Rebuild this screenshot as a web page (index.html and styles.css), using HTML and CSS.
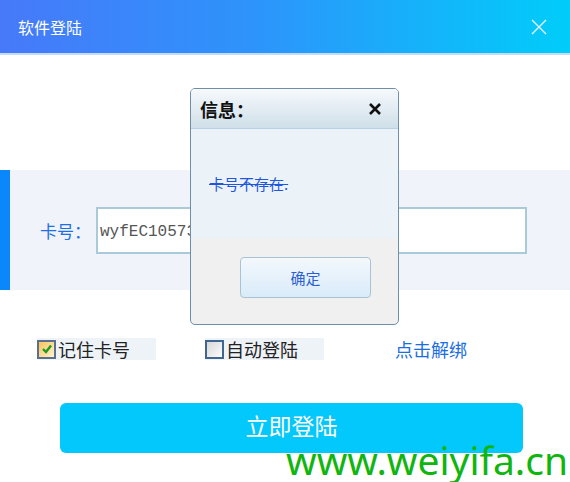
FILE: index.html
```html
<!DOCTYPE html>
<html lang="zh-CN">
<head>
    <meta charset="UTF-8">
    <meta name="viewport" content="width=device-width, initial-scale=1.0">
    <link rel="stylesheet" href="styles.css">
</head>
<body>
    <div class="window">
        <div class="titlebar">
            <span class="title">软件登陆</span>
            <svg class="close" width="16" height="16" viewBox="0 0 16 16">
                <path d="M1 1 L15 15 M15 1 L1 15" stroke="#e8f6ff" stroke-width="1.4" fill="none"/>
            </svg>
        </div>

        <div class="card-row">
            <label class="card-label">卡号：</label>
            <div class="card-input">wyfEC10573</div>
        </div>

        <div class="options">
            <div class="check">
                <span class="box checked">
                    <svg width="12" height="12" viewBox="0 0 12 12">
                        <path d="M2 6 L5 9 L10 2.5" stroke="#1f9a1f" stroke-width="2.4" fill="none"/>
                    </svg>
                </span>
                <span>记住卡号</span>
            </div>
            <div class="check second">
                <span class="box"></span>
                <span>自动登陆</span>
            </div>
            <a class="unbind">点击解绑</a>
        </div>

        <button class="login">立即登陆</button>

        <div class="dialog">
            <div class="dialog-head">
                <span>信息：</span>
                <svg width="14" height="14" viewBox="0 0 14 14">
                    <path d="M2 2 L12 12 M12 2 L2 12" stroke="#111" stroke-width="2.6" fill="none"/>
                </svg>
            </div>
            <div class="dialog-body">
                <span class="msg">卡号不存在.</span>
            </div>
            <div class="dialog-foot">
                <button class="ok">确定</button>
            </div>
        </div>

        <div class="watermark">www.weiyifa.cn</div>
    </div>
</body>
</html>
```

FILE: styles.css
```css
body {
    margin: 0;
    font-family: "Noto Sans CJK SC", "Noto Sans", sans-serif;
    background: #fff;
}
.window {
    position: relative;
    width: 570px;
    height: 482px;
    overflow: hidden;
    background: #fff;
}
.titlebar {
    height: 53px;
    display: flex;
    align-items: center;
    justify-content: space-between;
    padding: 0 23px 0 18px;
    background: linear-gradient(90deg, #4779f9, #2d94fb 45%, #00cdf9);
    border-bottom: 2px solid #c4dcf6;
}
.title {
    color: #fff;
    font-size: 16px;
}
.card-row {
    margin-top: 115px;
    height: 120px;
    display: flex;
    align-items: center;
    background: #f0f4fa;
    border-left: 10px solid #0a88fb;
    padding-left: 30px;
}
.card-label {
    color: #1e6ee6;
    font-size: 17px;
    width: 56px;
}
.card-input {
    width: 425px;
    height: 43px;
    border: 2px solid #a8cad9;
    background: #fff;
    font-family: "Liberation Mono", monospace;
    font-size: 16px;
    color: #555;
    line-height: 47px;
    padding-left: 2px;
}
.options {
    display: flex;
    align-items: center;
    margin-top: 46px;
    padding-left: 37px;
    font-size: 18px;
    color: #222;
}
.check {
    display: flex;
    align-items: center;
    width: 119px;
    height: 22px;
    background: #eef3f8;
}
.check.second {
    margin-left: 49px;
}
.box {
    width: 15px;
    height: 15px;
    border: 2px solid #3e6690;
    background: linear-gradient(135deg, #d8d8d8, #fbfbfb);
    display: flex;
    align-items: center;
    justify-content: center;
    margin-right: 2px;
}
.box.checked {
    border-color: #5a7189;
    background: linear-gradient(135deg, #f7c45a, #fff3d2);
}
.unbind {
    margin-left: 71px;
    color: #1a6ee2;
    font-size: 18px;
}
.login {
    display: block;
    margin: 41px 0 0 60px;
    width: 463px;
    height: 50px;
    border: none;
    border-radius: 6px;
    background: #02c8fc;
    color: #fff;
    font-family: inherit;
    font-size: 23px;
    line-height: 30px;
    padding: 0 0 6px;
}
.dialog {
    position: absolute;
    left: 190px;
    top: 88px;
    width: 207px;
    height: 235px;
    border: 1px solid #6f8fa9;
    border-radius: 5px;
    overflow: hidden;
    background: #f0f0f0;
    display: flex;
    flex-direction: column;
}
.dialog-head {
    height: 39px;
    display: flex;
    align-items: center;
    justify-content: space-between;
    padding: 0 16px 0 9px;
    background: linear-gradient(#f6f9fc, #cfdfe9);
    border-bottom: 1px solid #b7d1e3;
    font-size: 18px;
    font-weight: bold;
    color: #111;
}
.dialog-body {
    height: 109px;
    background: #ecf3f8;
    padding: 42px 0 0 18px;
    box-sizing: border-box;
}
.msg {
    color: #1e56dd;
    font-size: 15px;
    text-decoration: line-through;
}
.dialog-foot {
    flex: 1;
    padding: 19px 0 0 49px;
}
.ok {
    width: 131px;
    height: 41px;
    border: 1px solid #a9c3d6;
    border-radius: 4px;
    background: linear-gradient(#f3f8fd, #d9ebf9);
    color: #2d5fd2;
    font-family: inherit;
    font-size: 15px;
}
.watermark {
    position: absolute;
    left: 286px;
    top: 440px;
    color: #10b510;
    font-family: "Noto Sans", sans-serif;
    font-size: 39px;
    line-height: 39px;
    white-space: nowrap;
}
```
